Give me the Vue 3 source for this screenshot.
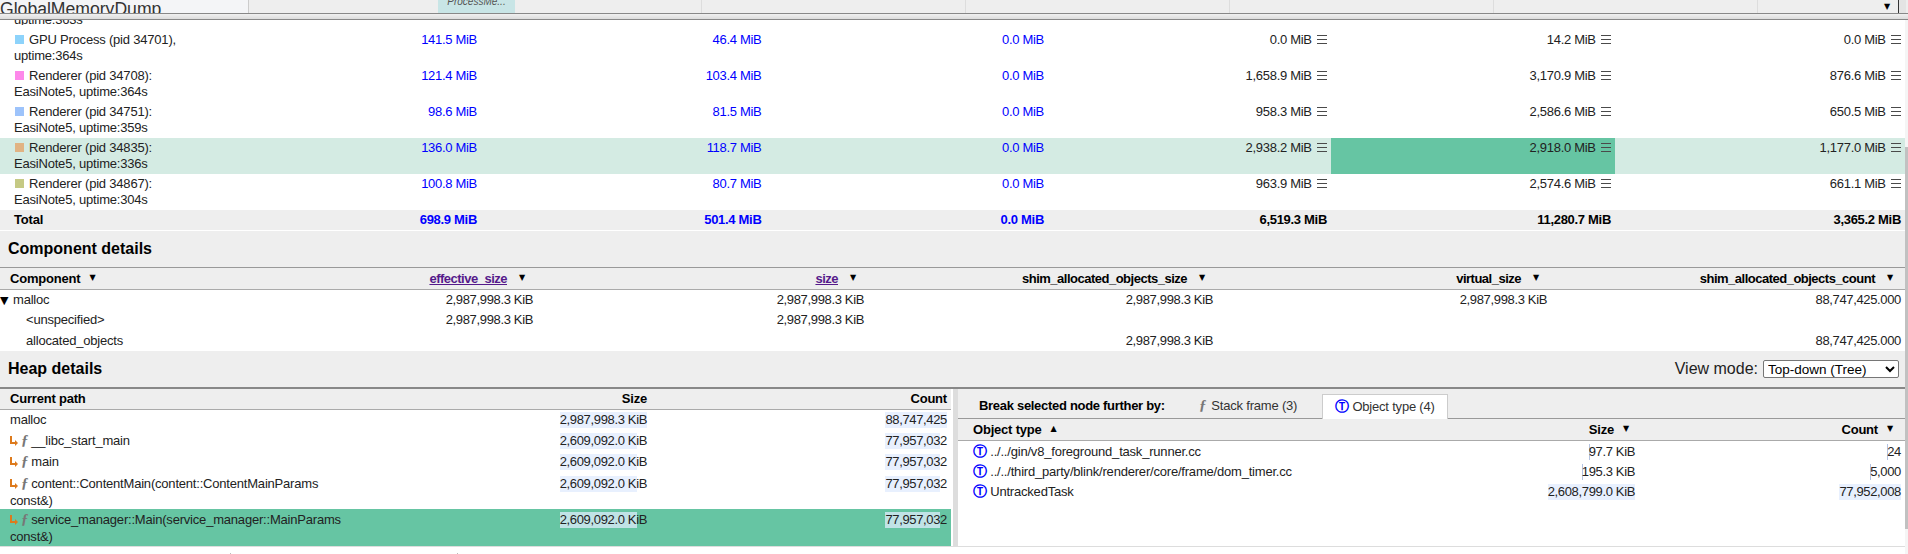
<template>
  <div class="page">
    <div class="top-bar">
      <div class="top-title"><span>GlobalMemoryDump</span></div>
      <div class="top-cell first"><span class="tab-mark">ProcessMe...</span></div>
      <div class="top-cell w264"></div>
      <div class="top-cell w264"></div>
      <div class="top-cell w264"></div>
      <div class="top-cell w264"></div>
      <div class="top-cell last"><span class="sort">▼</span></div>
      <div class="top-end"></div>
    </div>
    <div class="band"></div>

    <div class="main">
      <div class="content">
        <div class="cut-row">uptime:363s</div>

        <div class="proc-table">
          <div v-for="p in processes" :key="p.pid" class="proc-row" :class="{ selected: p.selected }">
            <div class="proc-name"><i class="swatch" :style="{ background: p.color }"></i>{{ p.name }}</div>
            <div v-for="(v, i) in p.values" :key="i" class="proc-val" :class="{ blue: i < 3, hot: p.selected && i === 4 }">
              {{ v }}
              <svg v-if="i > 2" class="menu-icon" width="10" height="9" viewBox="0 0 10 9">
                <path d="M0 .5h10M0 4.5h10M0 8.5h10" stroke="#4a4a4a" fill="none" />
              </svg>
            </div>
          </div>
          <div class="proc-row total">
            <div class="proc-name">Total</div>
            <div v-for="(v, i) in totals" :key="i" class="proc-val" :class="{ blue: i < 3 }">{{ v }}</div>
          </div>
        </div>

        <div class="section-title">Component details</div>
        <div class="comp-table">
          <div class="comp-row head">
            <div class="left">Component<span class="sort">▼</span></div>
            <div class="tight"><a class="link">effective_size</a><span class="sort">▼</span></div>
            <div class="tight"><a class="link">size</a><span class="sort">▼</span></div>
            <div class="tight">shim_allocated_objects_size<span class="sort">▼</span></div>
            <div class="tight">virtual_size<span class="sort">▼</span></div>
            <div class="tight">shim_allocated_objects_count<span class="sort">▼</span></div>
          </div>
          <div v-for="c in components" :key="c.name" class="comp-row">
            <div class="left" :class="{ child: c.child }"><span v-if="!c.child" class="tree-arrow">▼</span>{{ c.name }}</div>
            <div v-for="(v, i) in c.values" :key="i" class="numtext">{{ v }}</div>
          </div>
        </div>

        <div class="section-title heap-title">
          <span>Heap details</span>
          <label class="view-mode">View mode:
            <select>
              <option>Top-down (Tree)</option>
            </select>
          </label>
        </div>

        <div class="heap">
          <div class="heap-left">
            <div class="path-row head">
              <div class="left">Current path</div>
              <div>Size</div>
              <div>Count</div>
            </div>
            <div v-for="r in paths" :key="r.name" class="path-row" :class="{ selected: r.selected, tall: r.tall }">
              <div class="left">
                <template v-if="r.frame">
                  <svg class="arr" width="8" height="10" viewBox="0 0 8 10">
                    <path d="M1 0v7h5" fill="none" stroke="#dd7a1c" stroke-width="2" />
                    <path d="M5 4l3 3-3 3z" fill="#dd7a1c" />
                  </svg><span class="fn">ƒ</span>
                </template>{{ r.name }}
              </div>
              <div><span class="val"><i class="bar" :style="{ width: r.sizeBar + '%' }"></i>{{ r.size }}</span></div>
              <div><span class="val"><i class="bar" :style="{ width: r.countBar + '%' }"></i>{{ r.count }}</span></div>
            </div>
          </div>
          <div class="heap-split"></div>
          <div class="heap-right">
            <div class="break-bar">
              <b>Break selected node further by:</b>
              <span class="tab"><span class="fn">ƒ</span>Stack frame (3)</span>
              <span class="tab active"><span class="type-icon">Ⓣ</span> Object type (4)</span>
            </div>
            <div class="type-row head">
              <div class="left">Object type<span class="sort">▲</span></div>
              <div>Size<span class="sort">▼</span></div>
              <div>Count<span class="sort">▼</span></div>
            </div>
            <div v-for="t in types" :key="t.name" class="type-row">
              <div class="left"><span class="type-icon">Ⓣ</span> {{ t.name }}</div>
              <div><span class="val"><i class="bar" :class="{ thin: t.thin }" :style="{ width: t.thin ? '1px' : '100%' }"></i>{{ t.size }}</span></div>
              <div><span class="val"><i class="bar" :class="{ thin: t.thin }" :style="{ width: t.thin ? '1px' : '100%' }"></i>{{ t.count }}</span></div>
            </div>
          </div>
        </div>
        <div class="end-line"></div>
        <div class="marks"><i></i><i></i></div>
      </div>
      <div class="scrollbar"><div class="thumb"></div></div>
    </div>
  </div>
</template>

<script setup>
const processes = [
  { pid: 34701, color: '#8dd3fb', name: 'GPU Process (pid 34701), uptime:364s', values: ['141.5 MiB', '46.4 MiB', '0.0 MiB', '0.0 MiB', '14.2 MiB', '0.0 MiB'] },
  { pid: 34708, color: '#fd88ea', name: 'Renderer (pid 34708): EasiNote5, uptime:364s', values: ['121.4 MiB', '103.4 MiB', '0.0 MiB', '1,658.9 MiB', '3,170.9 MiB', '876.6 MiB'] },
  { pid: 34751, color: '#9dc3fb', name: 'Renderer (pid 34751): EasiNote5, uptime:359s', values: ['98.6 MiB', '81.5 MiB', '0.0 MiB', '958.3 MiB', '2,586.6 MiB', '650.5 MiB'] },
  { pid: 34835, color: '#e1b383', name: 'Renderer (pid 34835): EasiNote5, uptime:336s', values: ['136.0 MiB', '118.7 MiB', '0.0 MiB', '2,938.2 MiB', '2,918.0 MiB', '1,177.0 MiB'], selected: true },
  { pid: 34867, color: '#c5c984', name: 'Renderer (pid 34867): EasiNote5, uptime:304s', values: ['100.8 MiB', '80.7 MiB', '0.0 MiB', '963.9 MiB', '2,574.6 MiB', '661.1 MiB'] }
]
const totals = ['698.9 MiB', '501.4 MiB', '0.0 MiB', '6,519.3 MiB', '11,280.7 MiB', '3,365.2 MiB']

const components = [
  { name: 'malloc', values: ['2,987,998.3 KiB', '2,987,998.3 KiB', '2,987,998.3 KiB', '2,987,998.3 KiB', '88,747,425.000'] },
  { name: '<unspecified>', child: true, values: ['2,987,998.3 KiB', '2,987,998.3 KiB', '', '', ''] },
  { name: 'allocated_objects', child: true, values: ['', '', '2,987,998.3 KiB', '', '88,747,425.000'] }
]

const paths = [
  { name: 'malloc', size: '2,987,998.3 KiB', count: '88,747,425', sizeBar: 100, countBar: 100 },
  { name: '__libc_start_main', frame: true, size: '2,609,092.0 KiB', count: '77,957,032', sizeBar: 88, countBar: 88 },
  { name: 'main', frame: true, size: '2,609,092.0 KiB', count: '77,957,032', sizeBar: 88, countBar: 88 },
  { name: 'content::ContentMain(content::ContentMainParams const&)', frame: true, tall: true, size: '2,609,092.0 KiB', count: '77,957,032', sizeBar: 88, countBar: 88 },
  { name: 'service_manager::Main(service_manager::MainParams const&)', frame: true, tall: true, selected: true, size: '2,609,092.0 KiB', count: '77,957,032', sizeBar: 88, countBar: 88 }
]

const types = [
  { name: '../../gin/v8_foreground_task_runner.cc', size: '97.7 KiB', count: '24', thin: true },
  { name: '../../third_party/blink/renderer/core/frame/dom_timer.cc', size: '195.3 KiB', count: '5,000', thin: true },
  { name: 'UntrackedTask', size: '2,608,799.0 KiB', count: '77,952,008' }
]
</script>

<style>
html, body {
  margin: 0;
  background: #fff;
  overflow: hidden;
}
</style>

<style scoped>
.page {
  width: 1908px;
  height: 554px;
  overflow: hidden;
  font: 13px "Liberation Sans", Arial, sans-serif;
  letter-spacing: -0.2px;
  color: #222;
  line-height: 16px;
}

/* top strip of the tracing view */
.top-bar {
  display: flex;
  height: 13px;
  background: #eee;
  overflow: hidden;
}
.top-title {
  width: 249px;
  background: #f4f5f7;
  border-right: 1px solid #ccc;
  font-size: 17.6px;
  line-height: 19px;
  letter-spacing: 0;
  color: #333;
  box-sizing: border-box;
}
.top-cell {
  border-right: 1px solid #ddd;
}
.top-cell.first {
  width: 452px;
}
.w264 {
  width: 263px;
}
.top-cell.last {
  width: 140px;
  border-right: none;
  text-align: right;
}
.top-end {
  width: 7px;
  background: #e4e4e4;
  border-left: 1px solid #333;
}
.tab-mark {
  display: block;
  width: 77px;
  height: 13px;
  margin-left: 189px;
  background: #c8e5e6;
  font-size: 10px;
  font-style: italic;
  line-height: 4px;
  letter-spacing: 0;
  text-align: center;
  color: #555;
}
.band {
  height: 5px;
  border-top: 1px solid #888;
  border-bottom: 1px solid #888;
  background: linear-gradient(#f0f0f0, #dcdcdc);
}

.main {
  display: flex;
  height: 534px;
}
.content {
  width: 1905px;
  overflow: hidden;
}
.scrollbar {
  width: 3px;
  background: #f5f5f5;
}
.thumb {
  margin-top: 127px;
  height: 382px;
  background: #c1c1c1;
}
.cut-row {
  height: 5px;
  padding-left: 14px;
  line-height: 0;
  overflow: hidden;
}
.proc-table {
  padding-top: 5px;
}
.proc-row {
  display: grid;
  grid-template-columns: 197px 284px 284.5px 282.5px 283px 284px 290px;
  height: 36px;
}
.proc-row.selected {
  background: #d4ebe3;
}
.proc-name {
  padding: 2px 0 0 14px;
}
.swatch {
  display: inline-block;
  width: 9px;
  height: 9px;
  margin: 0 5px 0 1px;
}
.proc-val {
  padding: 2px 4px 0 0;
  text-align: right;
  letter-spacing: -0.3px;
}
.proc-val.blue {
  color: #00f;
}
.proc-val.hot {
  background: #66c5a3;
}
.menu-icon {
  margin-left: 2px;
}
.proc-row.total {
  height: 20px;
  background: #eee;
  font-weight: bold;
  color: #000;
}

.section-title {
  height: 37px;
  margin-top: 1px;
  box-sizing: border-box;
  padding: 0 8px;
  display: flex;
  align-items: center;
  justify-content: space-between;
  background: #eee;
  border-bottom: 1px solid #999;
  font-size: 16px;
  font-weight: bold;
  letter-spacing: 0;
  color: #000;
}
.heap-title {
  height: 38px;
  margin-top: 0;
  border-bottom: 2px solid #888;
}
.view-mode {
  font-size: 16px;
  font-weight: normal;
  color: #222;
  display: flex;
  align-items: center;
  gap: 5px;
  margin-right: -2px;
}
.view-mode select {
  width: 136px;
  height: 18px;
  font: 13.5px "Liberation Sans", Arial, sans-serif;
  color: #000;
  background: #fff;
  border: 1px solid #767676;
  border-radius: 2px;
  padding: 0;
}

.comp-row {
  display: grid;
  grid-template-columns: 200px 337px 331px 349px 334px 354px;
  height: 20.33px;
  line-height: 20px;
}
.comp-row > div {
  text-align: right;
  padding-right: 4px;
}
.comp-row > .left,
.path-row > .left,
.type-row > .left {
  text-align: left;
}
.numtext {
  letter-spacing: -0.35px;
}
.comp-row.head {
  height: 22px;
  line-height: 21px;
  background: #eee;
  border-bottom: 1px solid #aaa;
  box-sizing: border-box;
  font-weight: bold;
  color: #000;
}
.comp-row.head > .left {
  padding-left: 10px;
}
.comp-row.head > .tight {
  letter-spacing: -0.5px;
}
.comp-row.head > .tight .sort {
  margin-left: 12px;
}
.child {
  padding-left: 26px;
}
.tree-arrow {
  display: inline-block;
  width: 13px;
  font: 11px/1 "DejaVu Sans", sans-serif;
  color: #000;
}
.sort {
  display: inline-block;
  width: 14px;
  margin-left: 9px;
  font: 8px/1 "DejaVu Sans", sans-serif;
  vertical-align: 3px;
  color: #000;
  text-align: left;
}
.type-row.head > div:nth-child(2) .sort {
  width: 12px;
}
.link {
  color: #551a8b;
  text-decoration: underline;
}

.heap {
  display: flex;
  height: 157px;
}
.heap-left {
  width: 951px;
}
.heap-split {
  width: 7px;
  box-sizing: border-box;
  background: #fff;
  border-right: 5px solid #ddd;
}
.heap-right {
  width: 947px;
}
.path-row {
  display: grid;
  grid-template-columns: 351px 300px 300px;
  height: 21px;
}
.path-row.head {
  background: #eee;
  border-bottom: 1px solid #aaa;
  box-sizing: border-box;
  font-weight: bold;
  color: #000;
  line-height: 20px;
}
.path-row > div {
  padding: 2px 4px 0 10px;
  text-align: right;
}
.path-row.head > div {
  padding: 0 4px 0 10px;
}
.path-row.tall {
  height: 36px;
  line-height: 17px;
}
.path-row.selected {
  height: 37px;
  background: #66c5a3;
}
.path-row.selected .bar {
  background: #c0e3e6;
}
.val {
  display: inline-block;
  position: relative;
  z-index: 0;
  height: 16px;
  line-height: 16px;
  letter-spacing: -0.35px;
}
.bar {
  position: absolute;
  left: 0;
  top: 0;
  bottom: 0;
  z-index: -1;
  background: #e8f0fe;
}
.bar.thin {
  background: #b4c3e2;
}
.arr {
  vertical-align: -1px;
}
.fn {
  color: #777;
  font: italic bold 15px/1 "Liberation Serif", serif;
  margin: 0 3px 0 3px;
}
.type-icon {
  color: #00f;
  font: bold 14px/1 "DejaVu Sans", sans-serif;
}

.break-bar {
  display: flex;
  align-items: flex-end;
  height: 30px;
  background: #eee;
  border-bottom: 1px solid #999;
  box-sizing: border-box;
  padding-left: 21px;
  color: #000;
}
.break-bar b {
  width: 210px;
  line-height: 24px;
  letter-spacing: -0.3px;
  white-space: nowrap;
}
.tab {
  padding: 0 10px;
  line-height: 24px;
  color: #333;
  white-space: nowrap;
}
.tab .fn {
  margin: 0 5px 0 0;
}
.tab.active {
  background: #fff;
  border: 1px solid #ccc;
  border-bottom: none;
  margin-left: 15px;
  height: 25px;
  margin-bottom: -1px;
  box-sizing: border-box;
  padding: 0 12px;
}
.type-row {
  display: grid;
  grid-template-columns: 415px 266px 266px;
  height: 20px;
  line-height: 20px;
}
.type-row > div {
  text-align: right;
  padding: 1px 4px 0 0;
}
.type-row > .left {
  padding-left: 15px;
  white-space: nowrap;
}
.type-row.head {
  height: 22px;
  line-height: 21px;
  background: #eee;
  border-bottom: 1px solid #aaa;
  box-sizing: border-box;
  font-weight: bold;
  color: #000;
}
.type-row.head > div {
  padding-top: 0;
}
.end-line {
  height: 1px;
  background: #ddd;
}
.marks {
  display: flex;
  height: 1px;
  margin-top: 6px;
}
.marks i {
  width: 1px;
  margin-left: 230px;
  background: #bbb;
}
.marks i + i {
  margin-left: 226px;
}
</style>
